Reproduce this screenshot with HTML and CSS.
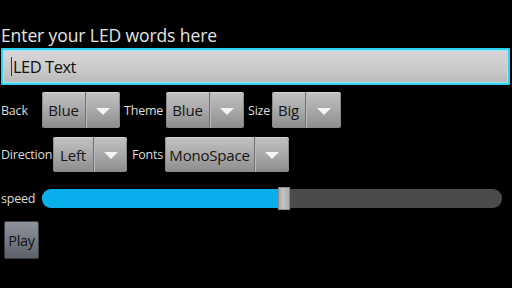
FILE: index.html
```html
<!DOCTYPE html>
<html>
<head>
<meta charset="utf-8">
<link rel="stylesheet" href="styles.css">
</head>
<body>
<div class="screen">
  <div class="title">Enter your LED words here</div>
  <div class="edit"><span class="cursor"></span>LED Text</div>
  <div class="row row1">
    <span class="label lb-back">Back</span>
    <div class="spinner sp-back"><span class="val">Blue</span><span class="arrow"><i></i></span></div>
    <span class="label lb-theme">Theme</span>
    <div class="spinner sp-theme"><span class="val">Blue</span><span class="arrow"><i></i></span></div>
    <span class="label lb-size">Size</span>
    <div class="spinner sp-size"><span class="val">Big</span><span class="arrow"><i></i></span></div>
  </div>
  <div class="row row2">
    <span class="label lb-dir">Direction</span>
    <div class="spinner sp-dir"><span class="val">Left</span><span class="arrow"><i></i></span></div>
    <span class="label lb-fonts">Fonts</span>
    <div class="spinner sp-fonts"><span class="val">MonoSpace</span><span class="arrow"><i></i></span></div>
  </div>
  <div class="row speed">
    <span class="label lb-speed">speed</span>
    <div class="bar">
      <div class="fill" style="width:238px"></div>
      <div class="thumb"></div>
    </div>
  </div>
  <button class="play">Play</button>
</div>
</body>
</html>
```
FILE: styles.css
```css
html, body {
  margin: 0;
  padding: 0;
  background: #000;
}
body {
  width: 512px;
  height: 288px;
  overflow: hidden;
  font-family: "Open Sans", "Noto Sans", sans-serif;
}
.screen {
  display: flex;
  flex-direction: column;
  padding-top: 24px;
}
.title {
  color: #e4e4e4;
  font-size: 17.5px;
  line-height: 23px;
  padding-left: 1px;
  letter-spacing: -0.1px;
}
.edit {
  margin: 1px 2px 0 1px;
  height: 33px;
  border: 2px solid #2cd3f3;
  box-shadow: inset 0 0 0 1px #9ae6f4;
  background: linear-gradient(#d9d6da, #c9c9c9 60%, #b9b9b9);
  display: flex;
  align-items: center;
  padding-left: 8px;
  color: #111;
  font-size: 16.5px;
  letter-spacing: -0.5px;
  border-radius: 1px;
}
.cursor {
  width: 1px;
  height: 19px;
  background: #333;
  margin-right: 1px;
}
.row {
  display: flex;
  align-items: center;
}
.row1 {
  margin-top: 7px;
  height: 36px;
}
.row2 {
  margin-top: 9px;
  height: 35px;
}
.label {
  color: #dcdcdc;
  font-size: 12.5px;
  letter-spacing: -0.2px;
  box-sizing: border-box;
}
.lb-back { width: 42px; padding-left: 1px; }
.lb-theme { width: 46px; padding-left: 4px; }
.lb-size { width: 28px; padding-left: 4px; }
.lb-dir { width: 53px; padding-left: 1px; }
.lb-fonts { width: 38px; padding-left: 5px; }
.lb-speed { width: 42px; padding-left: 1px; }
.spinner {
  height: 100%;
  display: flex;
  border-radius: 3px;
  background: linear-gradient(#c2c2c2, #a9a9a9 50%, #8c8c8c);
  box-shadow: inset 0 1px 0 #d4d4d4, inset 0 0 0 1px #8a8a8a;
  color: #151515;
  font-size: 15px;
  letter-spacing: -0.2px;
}
.val {
  display: flex;
  align-items: center;
  justify-content: center;
  border-right: 1px solid #6f6f6f;
  box-shadow: 1px 0 0 #bdbdbd;
  box-sizing: border-box;
}
.arrow {
  flex: 1;
  display: flex;
  align-items: center;
  justify-content: center;
}
.arrow i {
  width: 0;
  height: 0;
  border-left: 7px solid transparent;
  border-right: 7px solid transparent;
  border-top: 7px solid #f4f4f4;
  margin-top: 2px;
}
.sp-back { width: 78px; }
.sp-back .val { width: 44px; }
.sp-theme { width: 78px; }
.sp-theme .val { width: 44px; }
.sp-size { width: 69px; }
.sp-size .val { width: 34px; }
.sp-dir { width: 74px; }
.sp-dir .val { width: 41px; }
.sp-fonts { width: 124px; }
.sp-fonts .val { width: 90px; }
.speed {
  margin-top: 15px;
  height: 23px;
}
.bar {
  position: relative;
  width: 460px;
  height: 19px;
  border-radius: 9px;
  background: #4b4b4b;
}
.fill {
  height: 100%;
  border-radius: 9px 0 0 9px;
  background: #0aaeec;
}
.thumb {
  position: absolute;
  left: 236px;
  top: -2px;
  width: 12px;
  height: 23px;
  background: linear-gradient(90deg, #9e9e9e, #c6c6c6 40%, #a8a8a8);
  box-shadow: inset 0 0 0 1px #8a8a8a;
  border-radius: 1px;
}
.play {
  margin: 11px 0 0 4px;
  width: 35px;
  height: 38px;
  padding: 0;
  border: 1px solid #3b3e44;
  border-radius: 2px;
  background: linear-gradient(#8f949b, #767b83 50%, #5c6168);
  color: #111;
  font-family: "Open Sans", "Noto Sans", sans-serif;
  font-size: 14.5px;
  letter-spacing: -0.3px;
  align-self: flex-start;
}
```
